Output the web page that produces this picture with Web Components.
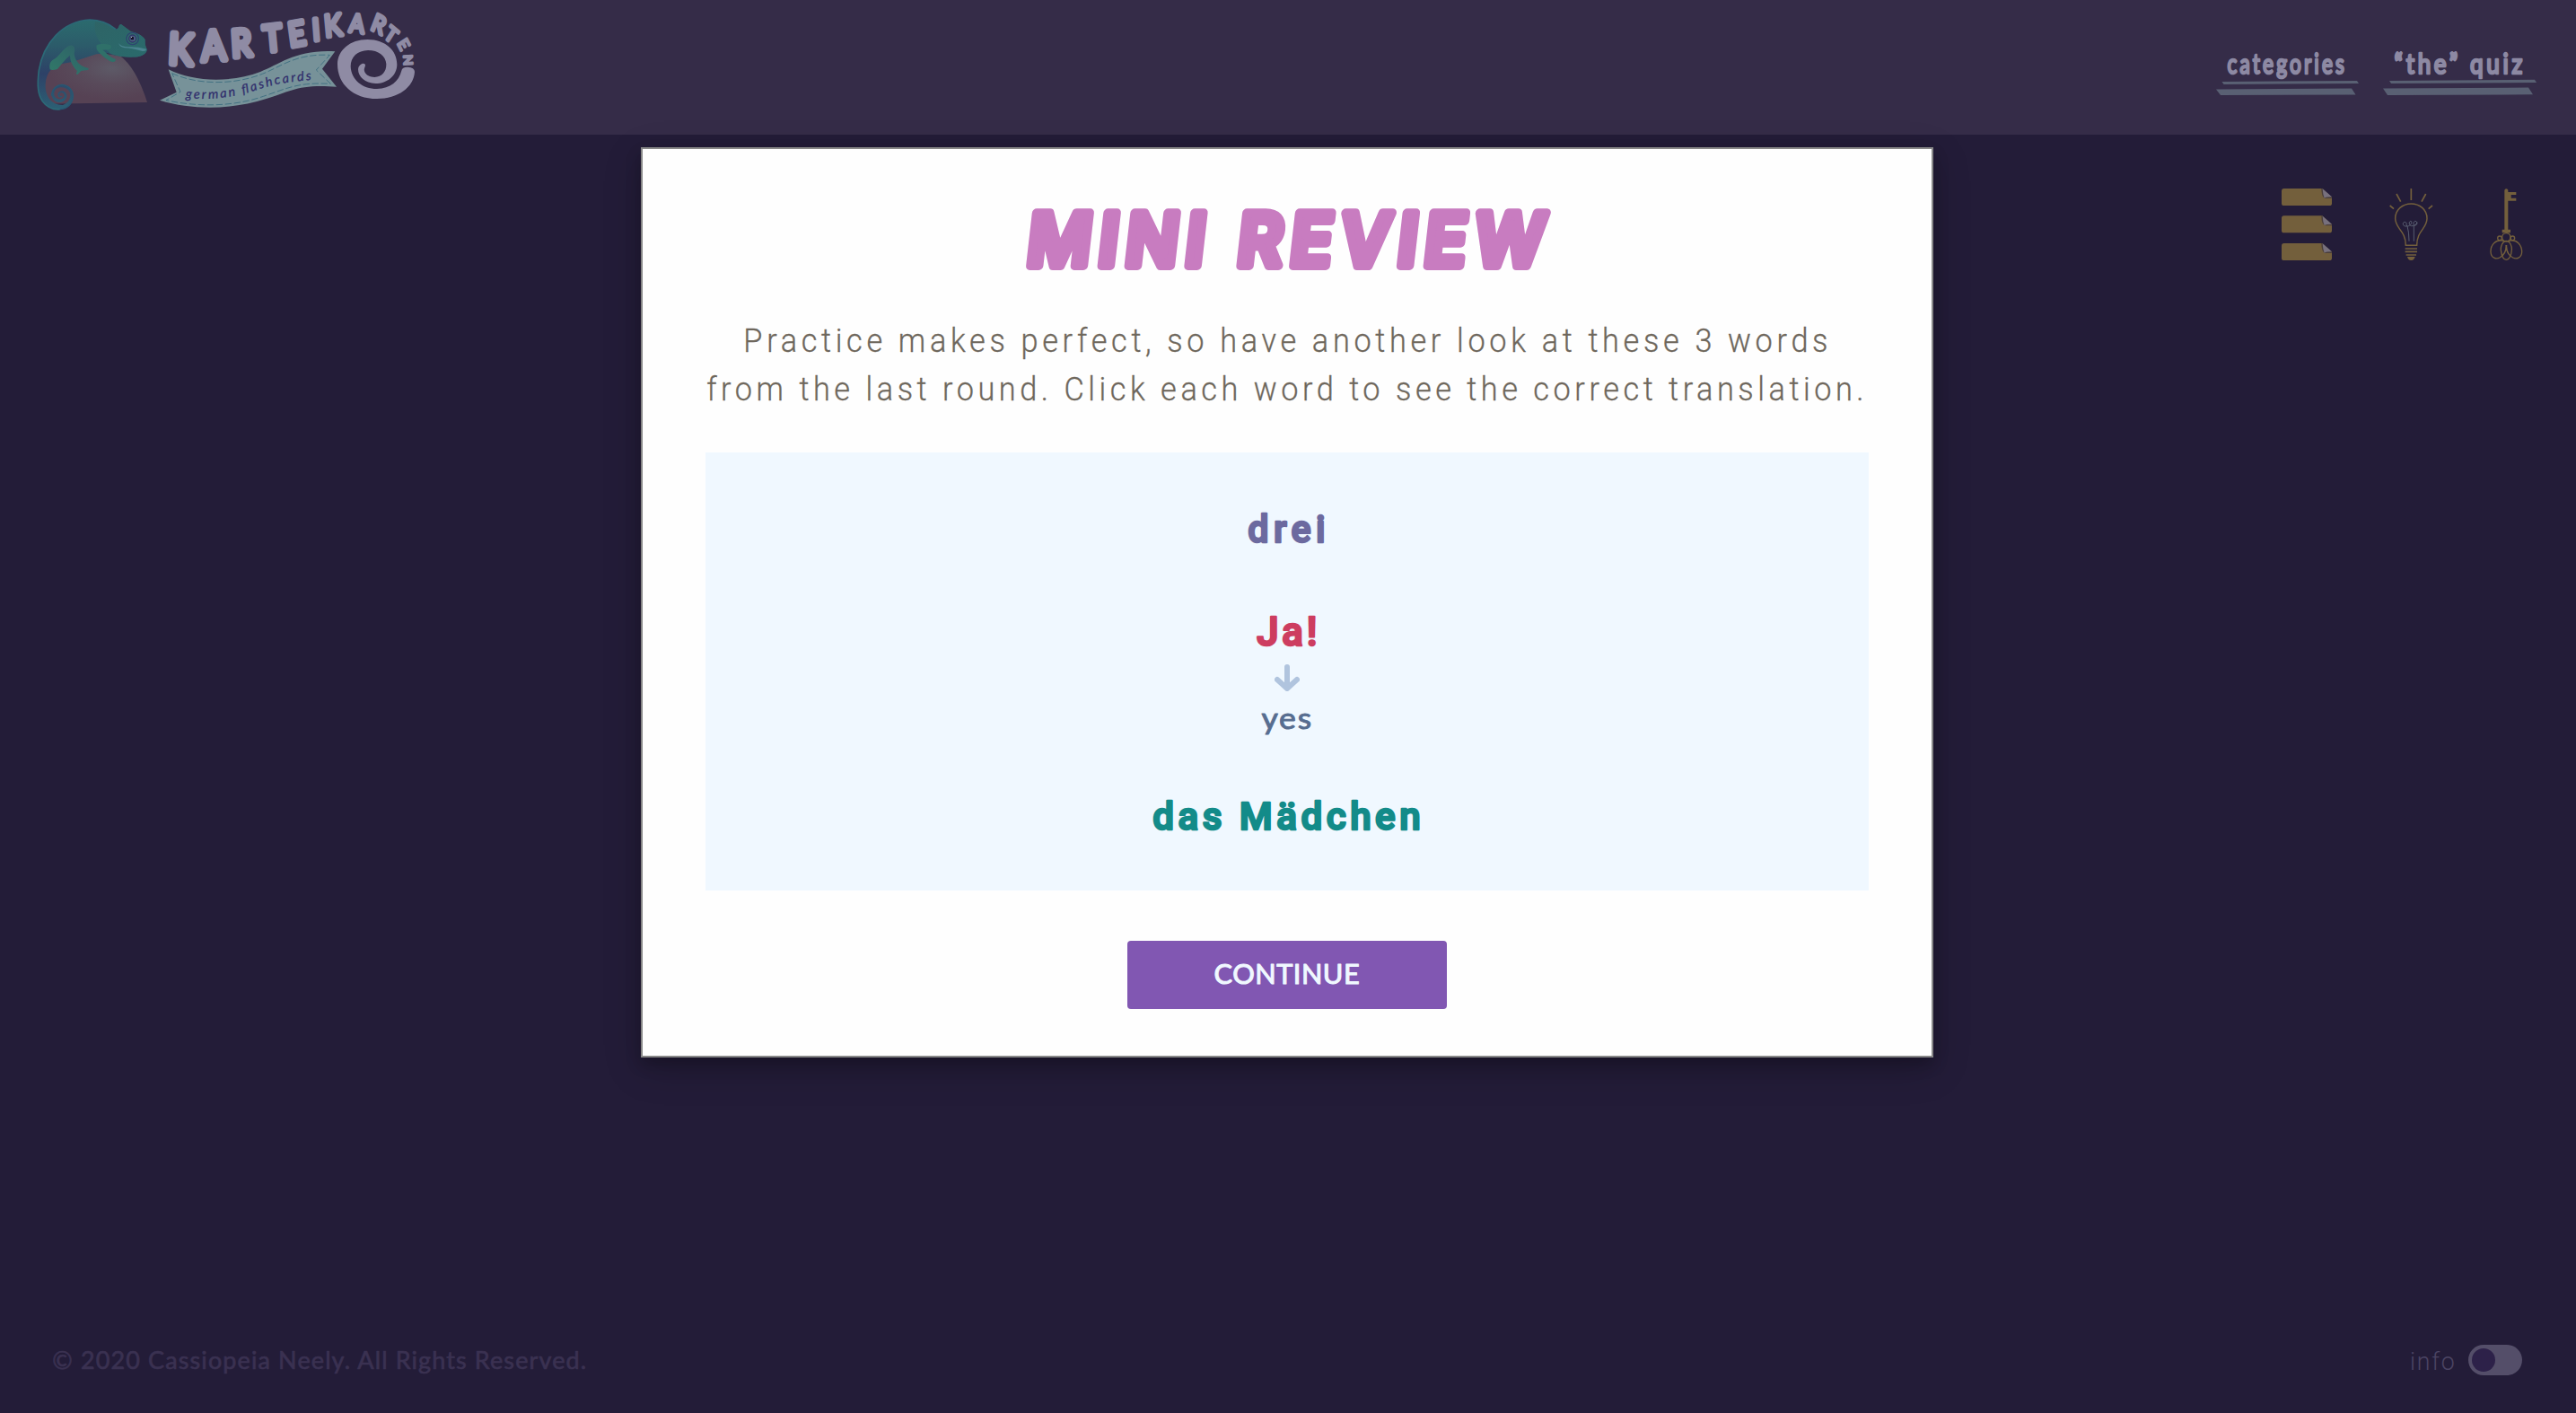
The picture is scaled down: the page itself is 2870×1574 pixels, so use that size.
<!DOCTYPE html>
<html lang="en">
<head>
<meta charset="utf-8">
<title>Karteikarten – Mini Review</title>
<style>
html,body{margin:0;height:100%;background:#231c38}
body{font-family:Lato,"Open Sans",sans-serif;overflow:hidden}
</style>
</head>
<body>
<flash-app></flash-app>
<script>
// Text with rounded terminals. cap = height of a capital, w = drawn width.
const ctx = document.createElement('canvas').getContext('2d');
class RoundText extends HTMLElement {
  connectedCallback() {
    if (this.shadowRoot) return;
    const g = (n, d) => this.getAttribute(n) ?? d;
    const text = g('text', ''), w = +g('w'), cap = +g('cap'), st = +g('stroke', 0), sx = +g('sx', 1);
    const weight = g('weight', 400), family = g('family', 'Lato'), slant = g('slant', 'normal');
    ctx.font = `${slant} ${weight} 100px ${family}`;
    const size = (cap - st) / ctx.measureText('H').actualBoundingBoxAscent * 100;
    ctx.font = `${slant} ${weight} ${size}px ${family}`;
    const m = ctx.measureText(text);
    const ink = m.actualBoundingBoxLeft + m.actualBoundingBoxRight;
    const ls = ((w - st) / sx - ink) / (text.length - 1);
    const x = st / 2 + m.actualBoundingBoxLeft * sx;
    this.attachShadow({mode: 'open'}).innerHTML = `
<style>:host{display:block;width:${w}px;height:${cap}px}svg{display:block;overflow:visible}</style>
<svg width="${w}" height="${cap}"><text transform="translate(${x} ${cap - st / 2}) skewX(${-g('skew', 0)}) scale(${sx} 1)"
 style="font:${slant} ${weight} ${size}px ${family},sans-serif;letter-spacing:${ls}px;white-space:pre" fill="currentColor" stroke="currentColor" stroke-width="${st}" stroke-linejoin="round" stroke-linecap="round"></text></svg>`;
    this.shadowRoot.querySelector('text').textContent = text;
  }
}

const define = (name, html) => customElements.define(name, class extends HTMLElement {
  connectedCallback() { if (!this.shadowRoot) this.attachShadow({mode: 'open'}).innerHTML = html; }
});

customElements.define('round-text', RoundText);

define('brand-logo', `
<style>:host{display:block;width:460px;height:150px}svg{display:block;overflow:visible}
.k{font-family:Lato,sans-serif;font-weight:400;fill:#8f8ba4;stroke:#8f8ba4;stroke-linejoin:round}
.s{font-family:Lato,sans-serif;font-style:italic;font-weight:400;font-size:43px;fill:#302d6c;stroke:#302d6c;stroke-width:.8;stroke-linejoin:round}</style>
<svg width="460" height="150" viewBox="0 0 1380 450">
<defs>
<radialGradient id="r" cx=".66" cy=".3" r=".62"><stop offset="0" stop-color="#5d5a67"/><stop offset=".5" stop-color="#594b5b"/><stop offset="1" stop-color="#564254"/></radialGradient>
<linearGradient id="b" x1="0" y1="0" x2="0" y2="1"><stop offset="0" stop-color="#2b6b6e"/><stop offset=".28" stop-color="#2c5c6a"/><stop offset=".6" stop-color="#2d4167"/><stop offset="1" stop-color="#2c6074"/></linearGradient>
<linearGradient id="h" x1="0" y1="0" x2="1" y2="1"><stop offset="0" stop-color="#2e6466"/><stop offset="1" stop-color="#2a6a6c"/></linearGradient>
<linearGradient id="l" x1="0" y1="1" x2="1" y2="0"><stop offset="0" stop-color="#317a68"/><stop offset="1" stop-color="#2e5f68"/></linearGradient>
</defs>
<path d="M95 347Q75 250 125 215L262 177L340 185Q395 225 432 342Z" fill="url(#r)"/>
<path d="M326 97C300 75 265 66 240 66C150 70 85 145 70 235C64 285 66 315 82 338C98 360 122 367 142 365C172 361 188 338 184 314C180 292 162 281 145 283C122 286 110 303 113 320C116 336 130 345 146 341C162 336 169 319 158 308C149 300 135 304 133 314C132 325 143 329 149 321L145 320C142 323 138 319 139 314C143 307 153 310 155 318C156 330 141 335 130 329C118 323 118 306 128 297C140 288 160 290 170 303C182 320 172 344 150 351C115 352 96 328 92 295C90 250 108 228 135 215L182 207L262 181L300 178C330 191 380 192 400 190C420 186 432 175 431 165C427 155 424 150 425 133C415 117 395 109 378 106L345 81C335 84 339 97 326 97Z" fill="url(#b)"/>
<path d="M326 97C300 75 265 66 240 66C150 70 85 145 70 235C64 285 66 315 82 338C98 360 122 367 142 365" fill="none" stroke="#2c6977" stroke-width="5"/>
<path d="M258 72C295 76 320 100 328 101Q337 99 338 85Q341 79 347 83L378 106C395 109 415 117 425 133C424 150 427 155 431 165C432 175 420 186 400 190C380 192 340 192 312 180C280 155 250 120 258 72Z" fill="url(#h)"/>
<path d="M107 232C103 212 110 202 125 195C145 180 155 155 178 151C192 153 191 168 188 180C192 205 205 221 236 228Q238 235 225 235L211 237L199 249Q192 250 198 237C181 220 174 202 174 185C160 195 145 215 132 231Q115 237 107 232Z" fill="url(#l)"/>
<path d="M262 152C272 145 300 147 310 151Q318 163 302 166L283 167C300 180 310 193 326 197Q329 206 317 207Q306 206 302 201C286 190 270 177 263 165Z" fill="#2f7069"/>
<path d="M337 145Q345 158 374 157Q405 157 430 164Q428 173 416 171Q380 161 356 160Q339 157 337 145Z" fill="#4a8490"/>
<circle cx="383" cy="129" r="20" fill="#316f6b" stroke="#2d4570" stroke-width="4"/><circle cx="383" cy="129" r="12" fill="#4e5f82" stroke="#303969" stroke-width="4"/><rect x="377" y="123" width="10" height="10" rx="2" fill="#17132b"/><rect x="378" y="123" width="3" height="3" fill="#aaa9b6"/>
<path d="M113 320C113 294 134 283 147 283C171 285 184 303 184 320C183 347 165 364 140 365" fill="none" stroke="#285873" stroke-width="4"/>
<g transform="translate(420 0)">
<path d="M83 232C170 275 290 277 390 240C455 215 510 165 640 172L597 230L645 290C520 280 490 305 410 330C300 365 170 370 54 335L110 308Z" fill="#779299"/>
<path d="M95 245C180 284 300 285 397 247C460 222 510 178 622 184L577 234L625 280C515 274 478 296 400 322C300 357 180 358 75 335L123 307Z" fill="none" stroke="#35687c" stroke-width="2.4" stroke-dasharray="22 8"/>
<path id="p" d="M140 328C250 336 320 319 380 300C450 276 500 273 580 265" fill="none"/>
<text class="s"><textPath href="#p" textLength="428" lengthAdjust="spacing">german flashcards</textPath></text>
<text class="k" transform="scale(.87 1)" x="93 224 340 465 563 652 698 788 869 921 973 998" y="212 204 191 174 157 136 124 106 97 123 144 184" rotate="3 -3 -4 -6 -9 -5 -6 6 24 36 60 87"><tspan font-size="142" stroke-width="21">K</tspan><tspan font-size="138" stroke-width="20">A</tspan><tspan font-size="125" stroke-width="20">R</tspan><tspan font-size="121" stroke-width="19">T</tspan><tspan font-size="111" stroke-width="18">E</tspan><tspan font-size="100" stroke-width="16">I</tspan><tspan font-size="101" stroke-width="15">K</tspan><tspan font-size="85" stroke-width="13">A</tspan><tspan font-size="81" stroke-width="12">R</tspan><tspan font-size="69" stroke-width="11">T</tspan><tspan font-size="57" stroke-width="9">E</tspan><tspan font-size="47" stroke-width="8">N</tspan></text>
<path d="M862 236Q864 224 882 224Q906 225 906 240C903 292 850 330 780 330C700 330 648 280 648 215C648 168 690 132 748 132C810 132 847 170 847 215C847 252 815 279 775 279C740 279 717 256 717 232C718 213 741 206 741 219C739 227 736 230 738 238C743 252 757 258 772 258C796 257 812 240 811 214C809 186 785 168 750 168C715 169 692 190 692 222C694 266 730 297 780 297C825 295 853 272 862 236Z" fill="#8f8ba4"/>
</g></svg>`);

define('site-header', `
<style>:host{display:flex;justify-content:space-between;height:150px;background:#352c48;padding:0 44px 0 20px}
nav{display:flex;gap:27px;padding-top:58px}
.n{display:flex;flex-direction:column;color:#8d89a3}.n round-text{margin-left:12px}.n svg{display:block;margin-top:7px;overflow:visible}</style>
<brand-logo></brand-logo>
<nav>
<div class="n"><round-text text="categories" w="132" cap="25" stroke="2.6" sx=".74" weight="400"></round-text><svg width="159" height="16" viewBox="0 2 159 16" fill="#596073"><path d="M6.500 3L157 2L159 5L8.500 6Z"/><path d="M0 11.500L151 10.500L155.500 17.600L5 18Z"/></svg></div>
<div class="n"><round-text text="“the” quiz" w="144" cap="25" stroke="2.6" sx=".85" weight="400"></round-text><svg width="171" height="16" viewBox="0 2 171 16" fill="#596073"><path d="M7 2L169 .700L171 4L9 5Z"/><path d="M0 10.500L162 9.500L167 17.300L5 18Z"/></svg></div>
</nav>`);

define('tool-bar', `
<style>:host{display:flex;justify-content:flex-end;padding:60px 59px 0 0;gap:62px}svg{display:block}</style>
<svg width="58" height="82" viewBox="0 0 174 246"><g id="x">
<path d="M8 0H136L168 29V50Q168 57 160 57H8Q0 57 0 50V8Q0 0 8 0Z" fill="#735f3c"/><path d="M133 0H136L168 29V33H146Q133 30 133 0Z" fill="#4b3f3b"/><path d="M137 1L168 28Q148 28 143 32Q138 20 137 1Z" fill="#77707d"/></g>
<use href="#x" y="91"/><use href="#x" y="183"/></svg>
<svg width="50" height="82" viewBox="485 90 150 246" fill="none" stroke="#735f3c" stroke-width="4.500">
<path d="M558 90V129M509 108L523 134M607 108L593 134M487 147L500 158M629 147L616 158" stroke-width="5"/>
<path d="M540 280C540 230 505 225 505 190C505 160 530 141 558 141C586 141 611 160 611 190C611 225 577 230 577 280Z"/>
<path d="M538 291H578M538 301H578M541 312H575" stroke-width="5"/><path d="M545 318H571Q568 330 558 330Q548 330 545 318Z" fill="#735f3c" stroke="none"/>
<path d="M551 266Q551 235 545 215M567 266V215M545 215C529 221 527 201 537 202C548 204 537 216 547 216C559 213 563 199 556 199C549 201 551 214 559 215C576 216 583 199 571 199C564 202 563 215 572 213Q579 211 578 203" stroke="#63697b" stroke-width="2.600"/></svg>
<svg width="37" height="82" viewBox="821 90 111 246" fill="none" stroke="#735f3c" stroke-width="4">
<path d="M870 95Q876 87 882 95V102H909V111H892V122H909V131H882V227H890V238H862V227H870Z" fill="#735f3c" stroke="none"/>
<circle cx="876" cy="253" r="14"/><circle cx="854" cy="256" r="7"/><circle cx="897" cy="256" r="7"/>
<path d="M869 265C840 257 823 280 824 302C825 322 842 327 854 321C868 313 877 300 875 279M883 265C912 257 928 280 928 302C927 322 910 327 898 321C884 313 875 300 877 279"/><path d="M876 265C863 266 857 283 858 296C860 314 867 328 876 328C885 328 893 314 894 296C895 283 889 266 876 265Z"/></svg>`);

define('info-toggle', `
<style>:host{display:flex;align-items:center;gap:16px;color:#4b4463}i{display:block;width:60px;height:34px;border-radius:17px;background:#544e69;box-sizing:border-box;padding:4px}i::before{content:"";display:block;width:26px;height:26px;border-radius:50%;background:#2d2149}</style>
<round-text style="margin-top:2px" text="info" w="47" cap="20" sx=".95" weight="300" family="Roboto"></round-text><i></i>`);

define('site-footer', `
<style>:host{display:flex;justify-content:space-between;align-items:center;padding:0 60px 42px 59px;color:#3a3151}</style>
<round-text text="© 2020 Cassiopeia Neely. All Rights Reserved." w="594" cap="20.4" stroke=".7" weight="400"></round-text><info-toggle></info-toggle>`);

define('word-card', `<style>:host{display:flex;flex-direction:column;align-items:center}</style><slot></slot>`);

define('main-button', `<style>:host{display:flex;justify-content:center;align-items:center;width:356px;height:76px;border-radius:4px;background:#8157b2;color:#f0f8ff}</style><slot></slot>`);

define('review-modal', `
<style>:host{box-sizing:border-box;display:flex;flex-direction:column;align-items:center;width:1440px;height:1014px;background:#fefefe;border:2px solid #888;padding-top:66px;box-shadow:0 8px 16px rgba(0,0,0,.2),0 12px 40px rgba(0,0,0,.19)}
.t{color:#c87cc0;margin-right:4px}.p{color:#6e675c}
.w{box-sizing:border-box;width:1296px;height:488px;background:#f0f8ff;margin-top:58px;padding-top:68px}
word-card round-text{margin-right:3px}
svg{display:block}</style>
<round-text class="t" text="MINI REVIEW" w="580" cap="69" stroke="10" sx=".95" skew="6.500" weight="600" family="Inter"></round-text>
<round-text class="p" style="margin:64.500px 3px 0 0" text="Practice makes perfect, so have another look at these 3 words" w="1204" cap="26.500" sx=".93" weight="300" family="Roboto" stroke=".3"></round-text>
<round-text class="p" style="margin:27.500px 6px 0 0" text="from the last round. Click each word to see the correct translation." w="1286" cap="26.500" sx=".93" weight="300" family="Roboto" stroke=".3"></round-text>
<div class="w">
<word-card style="color:#6c6a9f"><round-text text="drei" w="86" cap="33.500" stroke="2.5" sx=".96" weight="500" family="Roboto"></round-text></word-card>
<word-card style="color:#cd3d60;margin-top:80.500px"><round-text text="Ja!" w="66" cap="34" stroke="2.5" sx="1" weight="500" family="Roboto"></round-text>
<svg style="margin-top:20px" width="28" height="30" viewBox="0 0 28 30" fill="none" stroke="#b0c4de" stroke-width="6" stroke-linecap="round" stroke-linejoin="round"><path d="M14 3V26M3 17L14 27L25 17"/></svg>
<round-text style="color:#576d90;margin:17px 2px 0 0" text="yes" w="56" cap="25.500" stroke="1" sx="1.06" weight="400" family="Lato"></round-text></word-card>
<word-card style="color:#138b89;margin-top:79.500px"><round-text text="das Mädchen" w="298" cap="33.500" stroke="2.5" sx=".98" weight="500" family="Roboto"></round-text></word-card>
</div>
<main-button style="margin-top:56px"><round-text style="margin-bottom:3px" text="CONTINUE" w="161.500" cap="23.500" stroke="1.1" weight="400" family="Lato"></round-text></main-button>`);

define('flash-app', `
<style>:host{display:flex;flex-direction:column;width:2870px;height:1574px;background:#231c38;position:relative}
tool-bar{flex:1}.o{position:absolute;inset:0;display:flex;justify-content:center;align-items:flex-start;padding-top:164px;box-sizing:border-box;width:2868px}</style>
<site-header></site-header><tool-bar></tool-bar><site-footer></site-footer>
<div class="o"><review-modal></review-modal></div>`);
</script>
</body>
</html>
